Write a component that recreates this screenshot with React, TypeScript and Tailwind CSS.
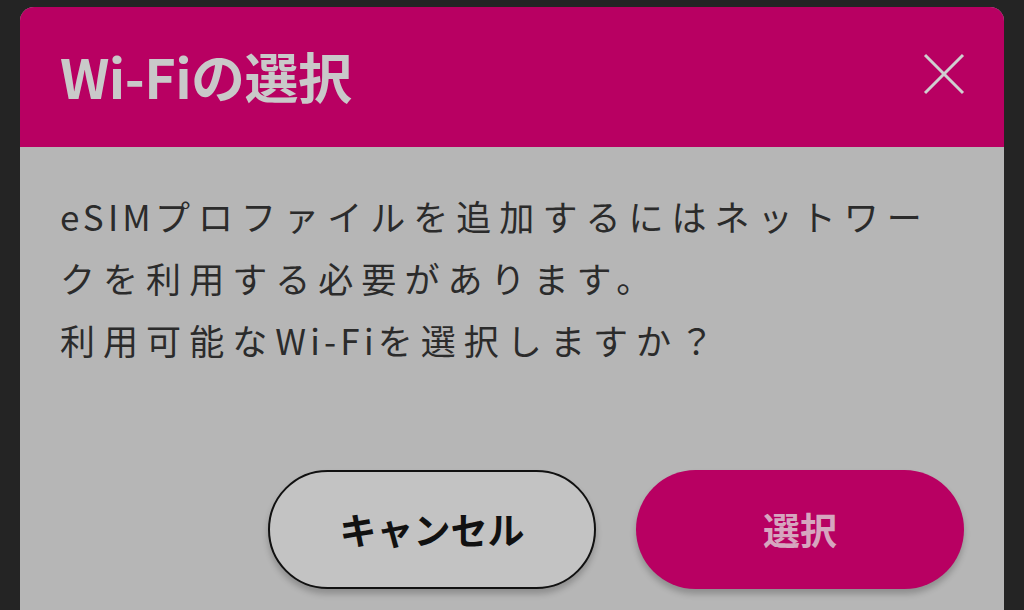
import React from 'react';

const jpFont = 'font-["Noto_Sans_CJK_JP","Noto_Sans",sans-serif]';

const CloseIcon: React.FC = () => (
    <svg width="42" height="42" viewBox="0 0 42 42" fill="none" stroke="#cfcfcf" strokeWidth="3">
        <line x1="2" y1="2" x2="40" y2="40" />
        <line x1="40" y1="2" x2="2" y2="40" />
    </svg>
);

const App: React.FC = () => {
    return (
        <div className={`w-[1024px] h-[610px] overflow-hidden bg-[#242424] pt-[7px] pl-[20px] pr-[20px] ${jpFont}`}>
            <div className="w-[984px] h-[603px] rounded-t-[14px] overflow-hidden flex flex-col bg-[#b6b6b6]">
                {/* Header */}
                <div className="h-[140px] shrink-0 bg-[#b80062] flex items-center justify-between pl-[40px] pr-[39px]">
                    <h1 className="text-[54px] font-bold leading-none text-[#c9c9c9] tracking-[-0.01em] pb-[2px]">
                        Wi-Fiの選択
                    </h1>
                    <div className="pb-[6px]">
                        <CloseIcon />
                    </div>
                </div>

                {/* Message */}
                <div className="pt-[38px] pl-[40px] pr-[20px]">
                    <p className="text-[35px] leading-[62px] tracking-[0.23em] text-[#2b2b2b] whitespace-nowrap">
                        <span className="tracking-[0.12em]">eSIM</span>プロファイルを追加するにはネットワー
                        <br />
                        クを利用する必要があります。
                        <br />
                        利用可能な<span className="tracking-[0.12em]">Wi-Fi</span>を選択しますか？
                    </p>
                </div>

                {/* Actions */}
                <div className="flex justify-end gap-[40px] pr-[40px] mt-[99px]">
                    <button className="w-[328px] h-[119px] rounded-full border-2 border-[#111] bg-[#c3c3c3] shadow-[0_5px_6px_rgba(0,0,0,0.22)] text-[37px] font-bold text-[#111]">
                        キャンセル
                    </button>
                    <button className="w-[328px] h-[119px] rounded-full bg-[#b80062] shadow-[0_5px_6px_rgba(0,0,0,0.22)] text-[37px] font-bold text-[#d6a6bf]">
                        選択
                    </button>
                </div>
            </div>
        </div>
    );
};

export default App;
